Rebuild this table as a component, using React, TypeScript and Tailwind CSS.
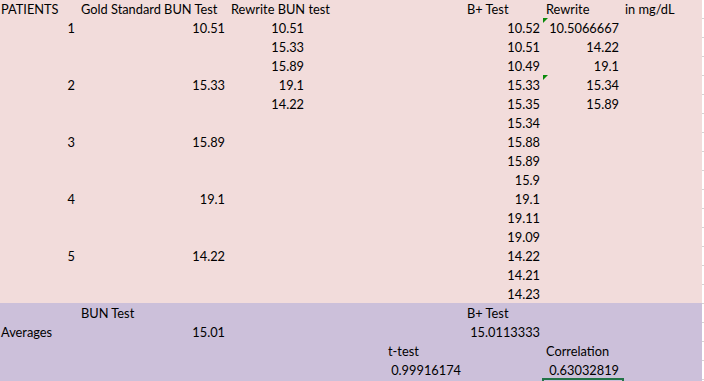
import React from "react";

type Cell = { t: string; r?: boolean; tri?: boolean } | null;

const W = [
  "w-[78px]",
  "w-[150px]",
  "w-[79px]",
  "w-[78px]",
  "w-[79px]",
  "w-[79px]",
  "w-[79px]",
  "w-[80px]",
];

const L = (t: string): Cell => ({ t });
const R = (t: string, tri?: boolean): Cell => ({ t, r: true, tri });

const pinkRows: Cell[][] = [
  [L("PATIENTS"), L("Gold Standard BUN Test"), L("Rewrite BUN test"), null, null, L("B+ Test"), L("Rewrite"), L("in mg/dL")],
  [R("1"), R("10.51"), R("10.51"), null, null, R("10.52"), R("10.5066667", true), null],
  [null, null, R("15.33"), null, null, R("10.51"), R("14.22"), null],
  [null, null, R("15.89"), null, null, R("10.49"), R("19.1"), null],
  [R("2"), R("15.33"), R("19.1"), null, null, R("15.33"), R("15.34", true), null],
  [null, null, R("14.22"), null, null, R("15.35"), R("15.89"), null],
  [null, null, null, null, null, R("15.34"), null, null],
  [R("3"), R("15.89"), null, null, null, R("15.88"), null, null],
  [null, null, null, null, null, R("15.89"), null, null],
  [null, null, null, null, null, R("15.9"), null, null],
  [R("4"), R("19.1"), null, null, null, R("19.1"), null, null],
  [null, null, null, null, null, R("19.11"), null, null],
  [null, null, null, null, null, R("19.09"), null, null],
  [R("5"), R("14.22"), null, null, null, R("14.22"), null, null],
  [null, null, null, null, null, R("14.21"), null, null],
  [null, null, null, null, null, R("14.23"), null, null],
];

const purpleRows: Cell[][] = [
  [null, L("BUN Test"), null, null, null, L("B+ Test"), null, null],
  [L("Averages"), R("15.01"), null, null, null, R("15.0113333"), null, null],
  [null, null, null, null, L("t-test"), null, L("Correlation"), null],
  [null, null, null, null, R("0.99916174"), null, R("0.63032819"), null],
];

function Row({ cells, bg, first }: { cells: Cell[]; bg: string; first?: boolean }) {
  return (
    <div className={`flex ${first ? "h-[18px]" : "h-[19px]"}`}>
      <div className={`flex ${bg}`}>
        {cells.map((c, i) => (
          <div
            key={i}
            className={`${W[i]} relative flex items-end overflow-visible whitespace-nowrap ${
              c && c.r ? "justify-end pr-[3px]" : i === 0 ? "justify-start pl-[1px]" : "justify-start pl-[3px]"
            } pb-[2px]`}
          >
            {c && c.tri && (
              <div className="absolute left-0 top-0 h-0 w-0 border-t-[5px] border-r-[5px] border-t-[#0a8a0a] border-r-transparent" />
            )}
            {c && <span className="leading-[14px]">{c.t}</span>}
          </div>
        ))}
      </div>
      <div className={`w-[2px] bg-white ${first ? "" : "border-t border-[#d4d4d4]"}`} />
    </div>
  );
}

export default function App() {
  return (
    <div
      className="h-[381px] w-[704px] overflow-hidden bg-white text-[12.8px] text-black"
      style={{ fontFamily: "Lato, 'Open Sans', sans-serif" }}
    >
      {pinkRows.map((r, i) => (
        <Row key={"p" + i} cells={r} bg="bg-[#f2dcdb]" first={i === 0} />
      ))}
      {purpleRows.map((r, i) => (
        <Row key={"u" + i} cells={r} bg="bg-[#ccc0da]" />
      ))}
      <div className="flex h-[2px]">
        <div className="flex bg-[#ccc0da]">
          <div className="w-[78px]" />
          <div className="w-[150px]" />
          <div className="w-[79px]" />
          <div className="w-[78px]" />
          <div className="w-[79px]" />
          <div className="w-[79px]" />
          <div className="relative w-[79px]">
            <div className="absolute left-[-1px] top-[-1px] h-[30px] w-[82px] border-2 border-[#217346]" />
          </div>
          <div className="w-[80px]" />
        </div>
        <div className="w-[2px] border-t border-[#d4d4d4] bg-white" />
      </div>
    </div>
  );
}
